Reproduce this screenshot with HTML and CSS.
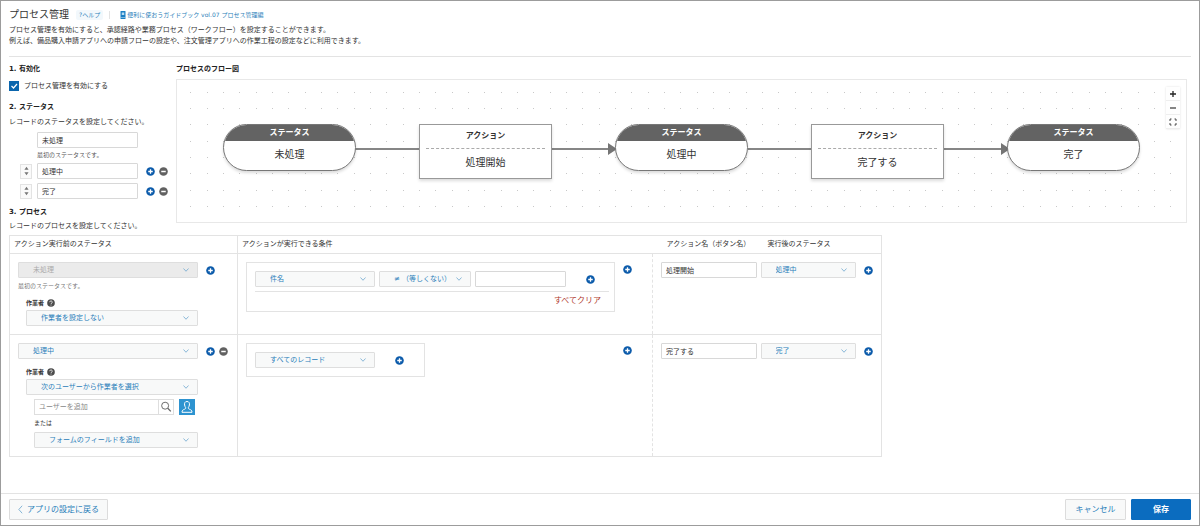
FILE: index.html
```html
<!DOCTYPE html>
<html lang="ja">
<head>
<meta charset="utf-8">
<meta name="viewport" content="width=device-width, initial-scale=1">
<title>プロセス管理</title>
<link rel="stylesheet" href="styles.css">
</head>
<body>
<svg class="sprite" aria-hidden="true">
  <symbol id="plus" viewBox="0 0 18 18"><circle cx="9" cy="9" r="8.6" fill="#0d5cab"/><path d="M9 4.5v9M4.5 9h9" stroke="#fff" stroke-width="2.6"/></symbol>
  <symbol id="minus" viewBox="0 0 18 18"><circle cx="9" cy="9" r="8.6" fill="#616161"/><path d="M4.5 9h9" stroke="#fff" stroke-width="3"/></symbol>
  <symbol id="help" viewBox="0 0 18 18"><circle cx="9" cy="9" r="8.6" fill="#4c4c4c"/><path d="M6 7.2C6 3.4 12 3.6 12 7c0 2.2-3 2.2-3 4.2M9 12.6v2" fill="none" stroke="#fff" stroke-width="1.8"/></symbol>
  <symbol id="sort" viewBox="0 0 12 24"><path d="M6 2l5 7H1zM6 22l5-7H1z" fill="#777"/></symbol>
</svg>

<header class="head">
  <div class="title-row">
    <h1 class="title">プロセス管理</h1>
    <a class="help-link" href="#">?ヘルプ</a>
    <span class="divider"></span>
    <a class="guide" href="#"><svg class="book" viewBox="0 0 12 16" aria-hidden="true"><rect x="1" width="10" height="16" rx="1" fill="#1d7fc4"/><path d="M3.500 3h5v5h-5z" fill="#b9dcf3"/><path d="M1 13h10" stroke="#d7ebf8"/></svg>便利に使おうガイドブック vol.07 プロセス管理編</a>
  </div>
  <p class="lead">プロセス管理を有効にすると、承認経路や業務プロセス（ワークフロー）を設定することができます。<br>例えば、備品購入申請アプリへの申請フローの設定や、注文管理アプリへの作業工程の設定などに利用できます。</p>
</header>

<main class="main">
  <div class="top">
    <div class="settings">
      <section>
        <h2 class="heading">1. 有効化</h2>
        <label class="enable"><input class="check" type="checkbox" checked>プロセス管理を有効にする</label>
      </section>
      <section class="statuses">
        <h2 class="heading">2. ステータス</h2>
        <p class="desc">レコードのステータスを設定してください。</p>
        <div class="status-list">
          <div class="first-status">
            <input class="text" aria-label="最初のステータス" value="未処理">
            <p class="note">最初のステータスです。</p>
          </div>
          <div class="status-row">
            <button class="handle" aria-label="並べ替え"><svg viewBox="0 0 12 24"><use href="#sort"/></svg></button>
            <input class="text" aria-label="ステータス" value="処理中">
            <span class="pair"><button class="icon" aria-label="追加"><svg><use href="#plus"/></svg></button><button class="icon" aria-label="削除"><svg><use href="#minus"/></svg></button></span>
          </div>
          <div class="status-row">
            <button class="handle" aria-label="並べ替え"><svg viewBox="0 0 12 24"><use href="#sort"/></svg></button>
            <input class="text" aria-label="ステータス" value="完了">
            <span class="pair"><button class="icon" aria-label="追加"><svg><use href="#plus"/></svg></button><button class="icon" aria-label="削除"><svg><use href="#minus"/></svg></button></span>
          </div>
        </div>
      </section>
      <section class="process-head">
        <h2 class="heading">3. プロセス</h2>
        <p class="desc">レコードのプロセスを設定してください。</p>
      </section>
    </div>

    <section class="flow">
      <h2 class="heading">プロセスのフロー図</h2>
      <div class="canvas">
        <svg class="canvas-bg" aria-hidden="true">
          <defs>
            <pattern id="dots" width="49" height="49" patternUnits="userSpaceOnUse">
              <path d="M13 12h1M30 12h1M46 12h1M13 28h1M30 28h1M46 28h1M13 44h1M30 44h1M46 44h1" stroke="#c8c8c8" stroke-width="1" transform="translate(0 .5)"/>
            </pattern>
          </defs>
          <rect width="100%" height="100%" fill="url(#dots)"/>
          <path d="M178 69h65M374 69h58M571 69h65M767 69h58" stroke="#868686" stroke-width="2"/>
          <path d="M431 63l9 6-9 6zM824 63l9 6-9 6z" fill="#757575"/>
        </svg>
        <div class="node status n1"><b class="node-head">ステータス</b><span class="node-body">未処理</span></div>
        <div class="node action n2"><b class="node-head">アクション</b><span class="node-body">処理開始</span></div>
        <div class="node status n3"><b class="node-head">ステータス</b><span class="node-body">処理中</span></div>
        <div class="node action n4"><b class="node-head">アクション</b><span class="node-body">完了する</span></div>
        <div class="node status n5"><b class="node-head">ステータス</b><span class="node-body">完了</span></div>
        <div class="zoom">
          <button class="zoom-btn" aria-label="拡大"><svg viewBox="0 0 14 14"><path d="M7 4v6M4 7h6" stroke="#222" stroke-width="1.3"/></svg></button>
          <button class="zoom-btn" aria-label="縮小"><svg viewBox="0 0 14 14"><path d="M4 7h6" stroke="#222" stroke-width="1.1"/></svg></button>
          <button class="zoom-btn" aria-label="全体表示"><svg viewBox="0 0 14 14"><path d="M4 6V4h1.500M8.500 4H10v2M10 8v2H8.500M5.500 10H4V8" fill="none" stroke="#333" stroke-width=".9"/></svg></button>
        </div>
      </div>
    </section>
  </div>

  <table class="process">
    <colgroup><col class="c-before"><col class="c-cond"><col class="c-name"><col class="c-after"></colgroup>
    <thead>
      <tr><th>アクション実行前のステータス</th><th class="solid">アクションが実行できる条件</th><th class="name-head">アクション名（ボタン名）</th><th class="after-head">実行後のステータス</th></tr>
    </thead>
    <tbody>
      <tr>
        <td>
          <div class="line">
            <select class="select wide" aria-label="実行前のステータス" disabled><option>未処理</option></select>
            <span class="pair"><button class="icon" aria-label="追加"><svg><use href="#plus"/></svg></button></span>
          </div>
          <p class="note first-note">最初のステータスです。</p>
          <div class="worker">
            <label class="worker-label" for="w1">作業者<svg class="q" aria-hidden="true"><use href="#help"/></svg></label>
            <select class="select" id="w1"><option>作業者を設定しない</option></select>
          </div>
        </td>
        <td class="solid">
          <div class="cond">
            <div class="box box-wide">
              <div class="cond-row">
                <select class="select field" aria-label="フィールド"><option>件名</option></select>
                <select class="select op" aria-label="演算子"><option>≠ （等しくない）</option></select>
                <input class="text value" aria-label="値">
                <button class="icon add" aria-label="条件を追加"><svg><use href="#plus"/></svg></button>
              </div>
              <div class="clear-row"><button class="clear">すべてクリア</button></div>
            </div>
            <button class="icon cond-add" aria-label="追加"><svg><use href="#plus"/></svg></button>
          </div>
        </td>
        <td class="dash"><input class="text" aria-label="アクション名" value="処理開始"></td>
        <td class="after">
          <div class="line">
            <select class="select next" aria-label="実行後のステータス"><option>処理中</option></select>
            <button class="icon" aria-label="追加"><svg><use href="#plus"/></svg></button>
          </div>
        </td>
      </tr>
      <tr>
        <td>
          <div class="line">
            <select class="select wide" aria-label="実行前のステータス"><option>処理中</option></select>
            <span class="pair"><button class="icon" aria-label="追加"><svg><use href="#plus"/></svg></button><button class="icon" aria-label="削除"><svg><use href="#minus"/></svg></button></span>
          </div>
          <div class="worker">
            <label class="worker-label" for="w2">作業者<svg class="q" aria-hidden="true"><use href="#help"/></svg></label>
            <select class="select" id="w2"><option>次のユーザーから作業者を選択</option></select>
            <div class="users">
              <div class="user-row">
                <div class="search">
                  <input class="search-input" aria-label="ユーザーを追加" placeholder="ユーザーを追加">
                  <button class="search-btn" aria-label="検索"><svg viewBox="0 0 16 16"><circle cx="7" cy="6.500" r="4" fill="none" stroke="#666" stroke-width="1.100"/><path d="M10 9.500l3.500 3.500" stroke="#666" stroke-width="1.500"/></svg></button>
                </div>
                <button class="person" aria-label="組織から選択"><svg viewBox="0 0 16 16"><path d="M8 2.500C5.800 2.500 5.300 4.300 5.600 6c.2 1.300.7 2 1.100 2.600.2 1-.4 1.300-1.300 1.700C4 10.900 3 11.200 3 13.300h10c0-2.100-1-2.400-2.400-3-.9-.4-1.500-.7-1.300-1.700.4-.6.9-1.300 1.100-2.600.3-1.700-.2-3.500-2.400-3.500z" fill="none" stroke="#fff"/></svg></button>
              </div>
              <label class="or" for="f2">または</label>
              <select class="select" id="f2"><option>フォームのフィールドを追加</option></select>
            </div>
          </div>
        </td>
        <td class="solid">
          <div class="cond">
            <div class="box">
              <div class="cond-row">
                <select class="select field" aria-label="フィールド"><option>すべてのレコード</option></select>
                <button class="icon add" aria-label="条件を追加"><svg><use href="#plus"/></svg></button>
              </div>
            </div>
            <button class="icon cond-add" aria-label="追加"><svg><use href="#plus"/></svg></button>
          </div>
        </td>
        <td class="dash"><input class="text" aria-label="アクション名" value="完了する"></td>
        <td class="after">
          <div class="line">
            <select class="select next" aria-label="実行後のステータス"><option>完了</option></select>
            <button class="icon" aria-label="追加"><svg><use href="#plus"/></svg></button>
          </div>
        </td>
      </tr>
    </tbody>
  </table>
</main>

<footer class="foot">
  <button class="btn back"><svg class="chev" viewBox="0 0 6 10" aria-hidden="true"><path d="M5 .5L1 5l4 4.500" fill="none" stroke="#6fa8cf"/></svg>アプリの設定に戻る</button>
  <div class="actions">
    <button class="btn cancel">キャンセル</button>
    <button class="btn save">保存</button>
  </div>
</footer>
</body>
</html>
```
FILE: styles.css
```css
* { box-sizing: border-box; }

body {
  margin: 0;
  min-height: 100vh;
  display: flex;
  flex-direction: column;
  border: 1px solid #9c9c9c;
  background: #fff;
  color: #333;
  font: 7px/12px "DejaVu Sans", "Noto Sans CJK JP", sans-serif;
}

h1, h2, p { margin: 0; }

button, input, select {
  margin: 0;
  padding: 0;
  font: inherit;
  color: inherit;
}

button { border: 0; background: none; cursor: pointer; }
a { text-decoration: none; }
svg { display: block; }
.sprite { position: absolute; width: 0; height: 0; }

/* Header */
.head {
  margin: 0 8px;
  padding: 6px 0 9px;
  border-bottom: 1px solid #e3e3e3;
}
.title-row { display: flex; align-items: center; height: 16px; }
.title { font-size: 10px; font-weight: 400; line-height: 16px; }
.help-link {
  margin-left: 7px;
  padding: 0 3px;
  border-radius: 2px;
  background: #f2f8fc;
  color: #2a80b9;
  font-size: 6px;
  line-height: 10px;
}
.divider { width: 1px; height: 8px; margin: 0 10px 0 6px; background: #e3e3e3; }
.guide {
  display: flex;
  align-items: center;
  gap: 1px;
  color: #2a80b9;
  font-size: 6px;
  line-height: 10px;
}
.book { width: 6px; height: 8px; }
.lead { margin-top: 2px; line-height: 11px; }

/* Settings and diagram */
.main { flex: 1; padding: 6px 8px 0; }
.top {
  display: grid;
  grid-template-columns: 159px minmax(0, 1fr);
  gap: 8px;
  padding-right: 4px;
}
.heading { font-size: 7px; font-weight: 700; line-height: 12px; color: #222; }
.enable { display: flex; align-items: center; gap: 5px; height: 10px; margin-top: 6px; }
.check {
  appearance: none;
  width: 10px;
  height: 10px;
  background: #0b66ad url("data:image/svg+xml,%3Csvg xmlns='http://www.w3.org/2000/svg' viewBox='0 0 10 10'%3E%3Cpath d='M2.500 5l2 2 3.500-4' fill='none' stroke='white' stroke-width='1.200'/%3E%3C/svg%3E");
}
.statuses { margin-top: 10px; }
.desc { margin-top: 3px; }
.status-list { display: flex; flex-direction: column; gap: 4px; margin-top: 4px; }
.first-status { width: 129px; padding-left: 28px; }
.status-row { display: flex; align-items: center; padding-left: 11px; }
.status-row .text { width: 101px; margin: 0 8px 0 5px; }
.handle {
  display: flex;
  align-items: center;
  justify-content: center;
  width: 12px;
  height: 15px;
  border: 1px solid #e3e3e3;
  background: #fafafa;
}
.handle svg { flex: none; width: 5px; height: 10px; }
.note { margin-top: 2px; font-size: 6px; line-height: 9px; color: #555; }
.process-head { margin-top: 7px; }
.process-head .desc { margin-top: 2px; }

.text {
  display: block;
  width: 100%;
  height: 16px;
  padding: 0 4px;
  border: 1px solid #d8d8d8;
  border-radius: 1px;
  background: #fff;
}
.pair { display: flex; gap: 4px; }
.icon { flex: none; width: 9px; height: 9px; }
.icon svg { width: 9px; height: 9px; }

/* Flow diagram */
.canvas {
  position: relative;
  height: 144px;
  margin-top: 4px;
  border: 1px solid #e8e8e8;
  overflow: hidden;
}
.canvas-bg { width: 100%; height: 100%; }
.node {
  position: absolute;
  top: 44px;
  display: flex;
  flex-direction: column;
  width: 133px;
  border: 1px solid #777;
  background: #fff;
  text-align: center;
  box-shadow: 0 2px 3px rgba(0, 0, 0, .14);
}
.n1 { left: 46px; }
.n2 { left: 242px; }
.n3 { left: 438px; }
.n4 { left: 634px; }
.n5 { left: 830px; }
.node-head { font-size: 8px; }
.node-body { font-size: 10px; }
.status { height: 47px; border-radius: 24px; overflow: hidden; }
.status .node-head { height: 16px; line-height: 16px; background: #636363; color: #fff; }
.status .node-body { line-height: 27px; }
.action { height: 55px; padding: 0 6px; border-color: #999; }
.action .node-head { height: 24px; border-bottom: 1px dashed #aaa; line-height: 22px; }
.action .node-body { line-height: 27px; }
.zoom {
  position: absolute;
  top: 7px;
  right: 6px;
  box-shadow: 0 0 2px rgba(0, 0, 0, .12);
}
.zoom-btn { display: block; width: 14px; height: 14px; background: #fefefe; border-bottom: 1px solid #eee; }
.zoom-btn svg { width: 14px; height: 14px; }

/* Process table */
.process {
  width: 873px;
  max-width: 100%;
  margin-top: 3px;
  border-collapse: collapse;
  table-layout: fixed;
  border: 1px solid #e3e3e3;
}
.c-before { width: 228px; }
.c-cond { width: 415px; }
.c-name { width: 108px; }
.process tr { border-bottom: 1px solid #e3e3e3; }
.process th { height: 18px; padding: 0 4px 2px; font-weight: 400; text-align: left; line-height: 14px; }
.process td { padding: 8px; vertical-align: top; }
.process .solid { border-left: 1px solid #e3e3e3; }
.process .dash { border-left: 1px dashed #e3e3e3; padding-right: 4px; }
.process .name-head { padding-left: 14px; }
.process .after-head { padding-left: 7px; }
.process .after { padding-left: 0; }

.line { display: flex; align-items: center; gap: 8px; }
.select {
  display: block;
  appearance: none;
  width: 100%;
  height: 16px;
  padding: 0 16px 0 14px;
  border: 1px solid #dedede;
  border-radius: 1px;
  background: #f8f9f9 url("data:image/svg+xml,%3Csvg xmlns='http://www.w3.org/2000/svg' viewBox='0 0 12 8'%3E%3Cpath d='M1 1l5 5.500L11 1' fill='none' stroke='%236fa8cf' stroke-width='1.600'/%3E%3C/svg%3E") no-repeat right 8px center / 6px 4px;
  color: #2a80b9;
}
.select:disabled { background-color: #ebebeb; color: #aaa; opacity: 1; }
.wide { width: 180px; }
.next { width: 96px; }
.first-note { margin-top: 3px; color: #777; }
.worker { width: 180px; padding-left: 8px; }
.worker-label {
  display: flex;
  align-items: center;
  gap: 3px;
  margin: 7px 0 2px;
  font-size: 6px;
  font-weight: 700;
  line-height: 11px;
}
.q { width: 8px; height: 8px; }
.users { padding-left: 8px; margin-top: 4px; }
.user-row { display: flex; gap: 5px; }
.search { display: flex; width: 140px; height: 16px; border: 1px solid #dedede; }
.search-input { flex: 1; min-width: 0; padding: 0 4px; border: 0; }
.search-input::placeholder { color: #888; }
.search-btn { width: 15px; height: 14px; border-left: 1px solid #dedede; }
.search-btn svg { width: 14px; height: 14px; }
.person { width: 16px; height: 16px; background: #2d93d0; }
.or { display: block; margin: 3px 0 4px; font-size: 6px; line-height: 10px; }

.cond { display: flex; align-items: flex-start; justify-content: space-between; padding-right: 12px; }
.cond-add { margin-top: 3px; }
.box { width: 179px; padding: 8px; border: 1px solid #e3e3e3; }
.box-wide { width: 369px; padding: 8px 5px 4px 8px; }
.cond-row { display: flex; align-items: center; gap: 4px; padding-right: 5px; }
.field { width: 120px; }
.op { width: 92px; }
.value { width: 91px; }
.add { margin-left: 16px; }
.clear-row { display: flex; justify-content: flex-end; margin-top: 4px; padding: 3px 8px 0; border-top: 1px solid #e3e3e3; }
.clear { color: #b0392e; font-size: 8px; line-height: 12px; }

/* Footer */
.foot {
  display: flex;
  justify-content: space-between;
  padding: 5px 8px;
  border-top: 1px solid #e3e3e3;
}
.actions { display: flex; gap: 5px; }
.btn {
  display: flex;
  align-items: center;
  justify-content: center;
  height: 21px;
  border: 1px solid #dcdcdc;
  border-radius: 1px;
  background: #f8f9f9;
  color: #2a80b9;
  font-size: 8px;
}
.back { gap: 4px; padding: 0 8px; }
.chev { width: 5px; height: 9px; }
.cancel { width: 61px; }
.save { width: 60px; border-color: #0b6cbf; background: #0b6cbf; color: #fff; font-weight: 700; }
```
